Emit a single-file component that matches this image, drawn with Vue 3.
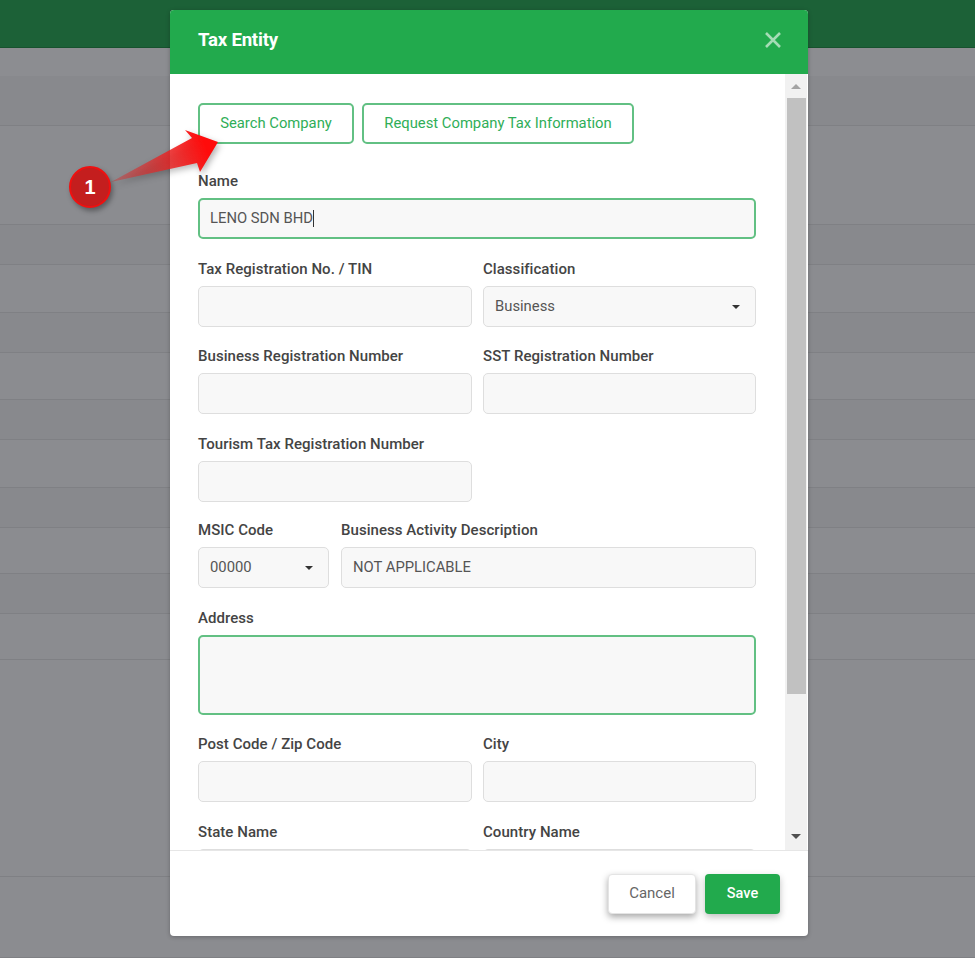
<script setup>
const rows = [50, 99, 40, 48, 40, 47, 40, 48, 40, 46, 40, 46, 217, 81]
const row2 = [
  [{ label: 'Tax Registration No. / TIN' }, { label: 'Classification', value: 'Business', select: true }],
  [{ label: 'Business Registration Number' }, { label: 'SST Registration Number' }],
  [{ label: 'Tourism Tax Registration Number' }, null],
]
</script>

<template>
  <div class="page">
    <div class="topbar"></div>
    <div class="subbar"></div>
    <div
      v-for="(h, i) in rows"
      :key="i"
      class="row"
      :class="{ alt: i % 2 === 0 && i < 12 }"
      :style="{ height: h + 'px' }"
    ></div>

    <section class="modal">
      <header class="head">
        <h1>Tax Entity</h1>
        <svg class="close" width="16" height="16" viewBox="0 0 16 16"><path d="M1 1l14 14M15 1L1 15" stroke="#a5dcb5" stroke-width="2.6" fill="none" /></svg>
      </header>
      <div class="body">
        <div class="scroll">
          <div class="actions">
            <button class="outline first">Search Company</button>
            <button class="outline second">Request Company Tax Information</button>
          </div>
          <div class="field">
            <label>Name</label>
            <div class="input focus">LENO SDN BHD<span class="caret"></span></div>
          </div>
          <div v-for="(r, i) in row2" :key="i" class="two">
            <template v-for="(f, j) in r" :key="j">
              <div v-if="f" class="field">
                <label>{{ f.label }}</label>
                <div class="input">{{ f.value }}<span v-if="f.select" class="arrow"></span></div>
              </div>
              <div v-else></div>
            </template>
          </div>
          <div class="msic">
            <div class="field">
              <label>MSIC Code</label>
              <div class="input">00000<span class="arrow"></span></div>
            </div>
            <div class="field">
              <label>Business Activity Description</label>
              <div class="input">NOT APPLICABLE</div>
            </div>
          </div>
          <div class="field">
            <label>Address</label>
            <div class="input focus area"></div>
          </div>
          <div class="two">
            <div class="field"><label>Post Code / Zip Code</label><div class="input"></div></div>
            <div class="field"><label>City</label><div class="input"></div></div>
          </div>
          <div class="two">
            <div class="field"><label>State Name</label><div class="input"></div></div>
            <div class="field"><label>Country Name</label><div class="input"></div></div>
          </div>
        </div>
        <div class="bar">
          <div class="tri up"></div>
          <div class="thumb"></div>
          <div class="tri down"></div>
        </div>
      </div>
      <footer class="foot">
        <button class="cancel">Cancel</button>
        <button class="save">Save</button>
      </footer>
    </section>

    <svg class="pointer" width="240" height="130" viewBox="0 0 240 130">
      <defs>
        <linearGradient id="g" x1="110" y1="182" x2="205" y2="145" gradientUnits="userSpaceOnUse">
          <stop offset="0" stop-color="#cc3333" stop-opacity=".4" />
          <stop offset=".55" stop-color="#e62626" stop-opacity=".8" />
          <stop offset="1" stop-color="#ff0b0b" />
        </linearGradient>
      </defs>
      <g transform="translate(0 -100)">
        <path d="M111 182 L192 138 L185 130 L218 142 L200 172 L197 163 Z" fill="url(#g)" />
      </g>
    </svg>
    <div class="badge">1</div>
  </div>
</template>

<style>
html, body { margin: 0; background: #8b8c90; }
</style>

<style scoped>
.page {
  position: relative;
  width: 975px;
  height: 958px;
  overflow: hidden;
  background: #8b8c90;
  font-family: Roboto, "Liberation Sans", sans-serif;
}
.topbar { height: 47px; background: #1c6137; border-bottom: 1px solid #17522e; }
.subbar { height: 28px; background: #8c8d91; }
.row { box-sizing: border-box; border-bottom: 1px solid #7f8084; }
.alt { background: #88898d; }
.modal {
  position: absolute;
  left: 170px;
  top: 10px;
  width: 638px;
  height: 926px;
  display: flex;
  flex-direction: column;
  background: #fff;
  border-radius: 4px;
  overflow: hidden;
  box-shadow: 0 1px 4px rgba(0, 0, 0, .25);
}
.head {
  flex: none;
  box-sizing: border-box;
  height: 64px;
  padding: 0 28px 4px;
  display: flex;
  align-items: center;
  justify-content: space-between;
  background: #22aa4d;
  color: #fff;
}
.head h1 { margin: 0; font-size: 18.6px; font-weight: 700; letter-spacing: -.2px; }
.close { margin-right: -1px; }
.body { flex: none; height: 776px; display: flex; overflow: hidden; }
.scroll { flex: 1; padding: 29px 29px 0 28px; min-width: 0; }
.actions { display: flex; gap: 8px; margin-bottom: 28px; }
button { font-family: inherit; cursor: pointer; }
.outline {
  height: 41px;
  background: #fff;
  border: 2px solid #62c083;
  border-radius: 5px;
  color: #2fae58;
  font-size: 14.8px;
  padding: 0 0 2px;
}
.first { width: 156px; }
.second { width: 272px; }
.field { margin-bottom: 20.5px; min-width: 0; }
label {
  display: block;
  height: 18px;
  line-height: 18px;
  margin-bottom: 8px;
  font-size: 15px;
  font-weight: 500;
  color: #444;
  letter-spacing: .05px;
}
.input {
  position: relative;
  box-sizing: border-box;
  height: 41px;
  line-height: 39px;
  padding: 0 11px;
  background: #f8f8f8;
  border: 1px solid #dedede;
  border-radius: 5px;
  font-size: 14.8px;
  color: #555;
}
.focus { border: 2px solid #62c083; line-height: 37px; padding: 0 10px; }
.area { height: 80px; }
.caret { display: inline-block; width: 1px; height: 17px; background: #333; vertical-align: -4px; }
.arrow {
  position: absolute;
  right: 15px;
  top: 18px;
  width: 0;
  height: 0;
  border: 4.5px solid transparent;
  border-top-color: #333;
  border-bottom-width: 0;
}
.two { display: grid; grid-template-columns: 274px 273px; gap: 11px; }
.msic { display: grid; grid-template-columns: 131px 415px; gap: 12px; margin-top: -1px; }
.bar {
  flex: none;
  width: 22px;
  margin-right: 1px;
  background: #f1f1f1;
  display: flex;
  flex-direction: column;
  align-items: center;
}
.thumb { width: 19px; height: 596px; background: #c1c1c1; flex: none; }
.tri { width: 0; height: 0; border: 5px solid transparent; flex: none; }
.up { border-bottom-color: #a3a3a3; border-top-width: 0; margin: 10px 0 9px; }
.down { border-top-color: #505050; border-bottom-width: 0; margin-top: 140px; }
.foot {
  flex: 1;
  display: flex;
  justify-content: flex-end;
  gap: 9px;
  padding: 23px 28px 0 0;
  border-top: 1px solid #e6e6e6;
}
.foot button { height: 40px; border-radius: 4px; padding: 0 0 2px; }
.cancel {
  width: 88px;
  background: #fff;
  border: 1px solid #e4e4e4;
  color: #666;
  font-size: 15px;
  box-shadow: 0 3px 7px rgba(0, 0, 0, .35);
}
.save {
  width: 75px;
  background: #22aa4d;
  border: 0;
  color: #fff;
  font-size: 14.5px;
  font-weight: 500;
  box-shadow: 0 3px 7px rgba(0, 0, 0, .25);
}
.pointer { position: absolute; left: 0; top: 100px; filter: drop-shadow(2px 3px 3px rgba(0, 0, 0, .3)); }
.badge {
  position: absolute;
  left: 69px;
  top: 166px;
  box-sizing: border-box;
  width: 42px;
  height: 42px;
  border: 2px solid #f01010;
  border-radius: 50%;
  background: #c41e1e;
  color: #fff;
  font: 700 20px/38px "Liberation Sans", sans-serif;
  text-align: center;
  box-shadow: 2px 3px 5px rgba(0, 0, 0, .35);
}
</style>
